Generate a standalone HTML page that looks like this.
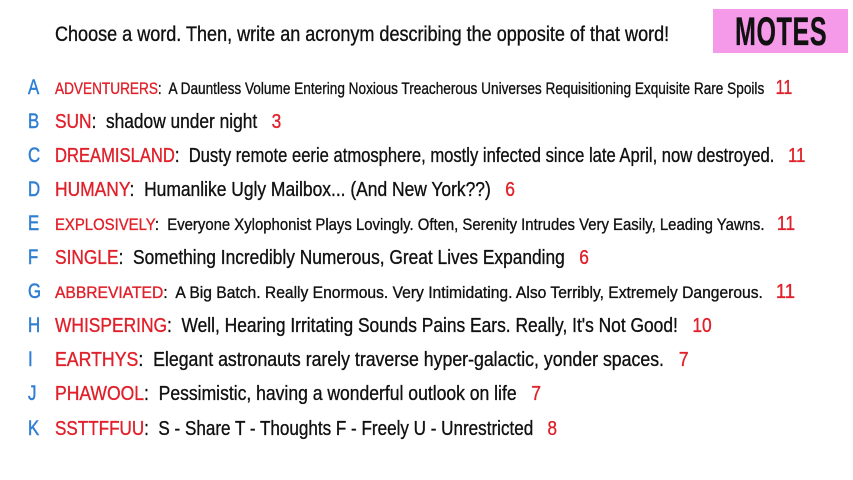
<!DOCTYPE html>
<html><head><meta charset="utf-8">
<style>
html,body{margin:0;padding:0;background:#fff;width:853px;height:480px;overflow:hidden;font-family:"Liberation Sans",sans-serif;}
.abs{position:absolute;white-space:nowrap;transform-origin:0 50%;line-height:1;-webkit-text-stroke:0.35px currentColor;}
.L{color:#2f7fd4;font-size:21px;left:28px;-webkit-text-stroke:0.5px currentColor;}
.w{color:#e0202a;}
.t{color:#111;}
.n{color:#e0202a;}
#title{color:#111;font-size:21px;left:55px;top:24px;}
#box{position:absolute;left:713px;top:9px;width:135px;height:44px;background:#f59ae9;}
#motes{font-weight:bold;font-size:40px;color:#111;left:735px;top:12px;letter-spacing:1px;}
</style></head><body>
<div id="box"></div>
<div class="abs" id="motes" data-r="827">MOTES</div>
<div class="abs" id="title" data-r="669">Choose a word. Then, write an acronym describing the opposite of that word!</div>

<div class="abs L" style="top:77px">A</div>
<div class="abs" style="left:55px;top:78px;font-size:17px" data-r="792"><span class="w">ADVENTURERS</span><span class="t">:&nbsp; A Dauntless Volume Entering Noxious Treacherous Universes Requisitioning Exquisite Rare Spoils&nbsp;&nbsp; </span><span class="n" style="font-size:20px">11</span></div>

<div class="abs L" style="top:111px">B</div>
<div class="abs" style="left:55px;top:112px;font-size:20px" data-r="281"><span class="w">SUN</span><span class="t">:&nbsp; shadow under night&nbsp;&nbsp; </span><span class="n">3</span></div>

<div class="abs L" style="top:145px">C</div>
<div class="abs" style="left:55px;top:146px;font-size:20px" data-r="805"><span class="w">DREAMISLAND</span><span class="t">:&nbsp; Dusty remote eerie atmosphere, mostly infected since late April, now destroyed.&nbsp;&nbsp; </span><span class="n">11</span></div>

<div class="abs L" style="top:179px">D</div>
<div class="abs" style="left:55px;top:180px;font-size:20px" data-r="515"><span class="w">HUMANY</span><span class="t">:&nbsp; Humanlike Ugly Mailbox... (And New York??)&nbsp;&nbsp; </span><span class="n">6</span></div>

<div class="abs L" style="top:213px">E</div>
<div class="abs" style="left:55px;top:214px;font-size:17px" data-r="795"><span class="w">EXPLOSIVELY</span><span class="t">:&nbsp; Everyone Xylophonist Plays Lovingly. Often, Serenity Intrudes Very Easily, Leading Yawns.&nbsp;&nbsp; </span><span class="n" style="font-size:20px">11</span></div>

<div class="abs L" style="top:247px">F</div>
<div class="abs" style="left:55px;top:248px;font-size:20px" data-r="589"><span class="w">SINGLE</span><span class="t">:&nbsp; Something Incredibly Numerous, Great Lives Expanding&nbsp;&nbsp; </span><span class="n">6</span></div>

<div class="abs L" style="top:281px">G</div>
<div class="abs" style="left:55px;top:282px;font-size:17px" data-r="795"><span class="w">ABBREVIATED</span><span class="t">:&nbsp; A Big Batch. Really Enormous. Very Intimidating. Also Terribly, Extremely Dangerous.&nbsp;&nbsp; </span><span class="n" style="font-size:20px">11</span></div>

<div class="abs L" style="top:315px">H</div>
<div class="abs" style="left:55px;top:316px;font-size:20px" data-r="712"><span class="w">WHISPERING</span><span class="t">:&nbsp; Well, Hearing Irritating Sounds Pains Ears. Really, It's Not Good!&nbsp;&nbsp; </span><span class="n">10</span></div>

<div class="abs L" style="top:349px">I</div>
<div class="abs" style="left:55px;top:350px;font-size:20px" data-r="689"><span class="w">EARTHYS</span><span class="t">:&nbsp; Elegant astronauts rarely traverse hyper-galactic, yonder spaces.&nbsp;&nbsp; </span><span class="n">7</span></div>

<div class="abs L" style="top:383px">J</div>
<div class="abs" style="left:55px;top:384px;font-size:20px" data-r="541"><span class="w">PHAWOOL</span><span class="t">:&nbsp; Pessimistic, having a wonderful outlook on life&nbsp;&nbsp; </span><span class="n">7</span></div>

<div class="abs L" style="top:418px">K</div>
<div class="abs" style="left:55px;top:419px;font-size:20px" data-r="557"><span class="w">SSTTFFUU</span><span class="t">:&nbsp; S - Share T - Thoughts F - Freely U - Unrestricted&nbsp;&nbsp; </span><span class="n">8</span></div>

<script>
document.querySelectorAll('[data-r]').forEach(function(e){
  var l=e.offsetLeft, w=e.offsetWidth, r=+e.getAttribute('data-r');
  if(w>0) e.style.transform='scaleX('+((r-l)/w)+')';
});
document.querySelectorAll('.L').forEach(function(e){e.style.transform='scaleX(0.8)';});
</script>
</body></html>
